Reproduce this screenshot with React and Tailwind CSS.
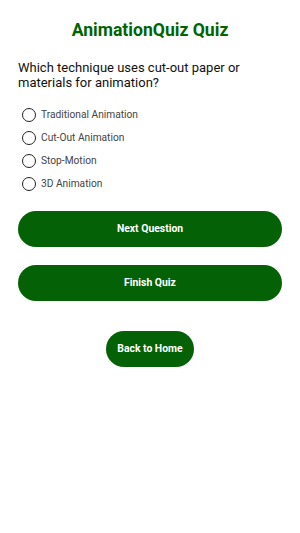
const options = ['Traditional Animation', 'Cut-Out Animation', 'Stop-Motion', '3D Animation']

export default function App() {
    return (
        <div className="w-[300px] min-h-[533px] bg-white px-[18px] pt-[19px] font-['Roboto',sans-serif]">
            {/* Title */}
            <h1 className="text-center text-[17.6px] leading-[22px] font-bold text-[#006400]">AnimationQuiz Quiz</h1>

            {/* Question */}
            <p className="mt-[19px] text-[13px] leading-[15px] text-[#111]">
                Which technique uses cut-out paper or materials for animation?
            </p>

            {/* Options */}
            <div className="mt-[18px] flex flex-col gap-[9px] pl-[4px]">
                {options.map(opt => (
                    <label key={opt} className="flex items-center gap-[5px] h-[14px]">
                        <span className="w-[14px] h-[14px] rounded-full border-[1.5px] border-[#222] shrink-0" />
                        <span className="text-[10.2px] text-[#444]">{opt}</span>
                    </label>
                ))}
            </div>

            {/* Actions */}
            <div className="mt-[20px] flex flex-col gap-[18px]">
                <button className="h-[36px] w-full rounded-full bg-[#056105] text-white text-[10.4px] font-bold">Next Question</button>
                <button className="h-[36px] w-full rounded-full bg-[#056105] text-white text-[10.4px] font-bold">Finish Quiz</button>
            </div>

            <div className="mt-[30px] flex justify-center">
                <button className="h-[36px] w-[88px] rounded-full bg-[#056105] text-white text-[10.4px] font-bold">Back to Home</button>
            </div>
        </div>
    )
}
